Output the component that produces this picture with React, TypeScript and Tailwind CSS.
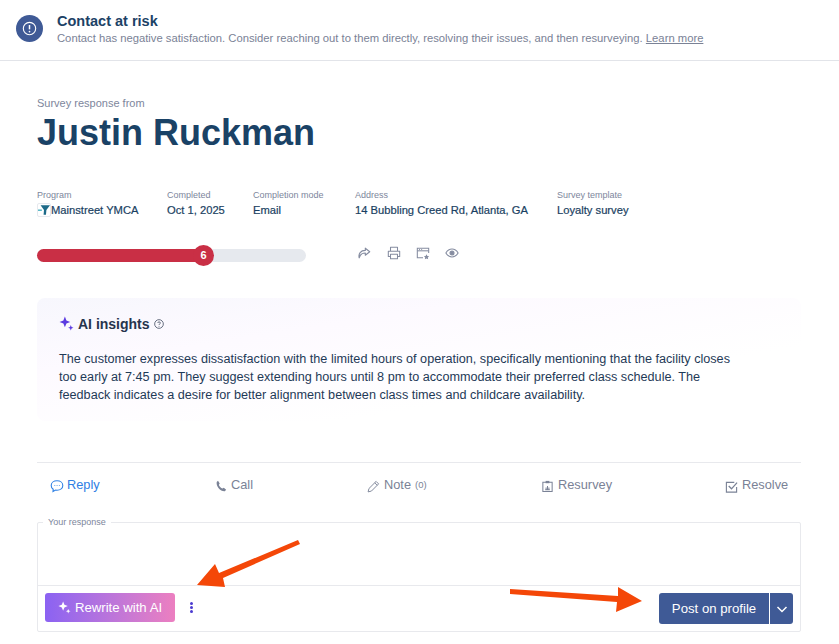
import React from 'react';

const Meta = ({ label, value, className }: { label: string; value: React.ReactNode; className: string }) => (
  <div className={className}>
    <div className="text-[9px] leading-[12px] text-[#7d869c]">{label}</div>
    <div className="mt-px text-[11.2px] leading-[16px] text-[#1a3f62] [-webkit-text-stroke:0.2px_#1a3f62]">{value}</div>
  </div>
);

const Tab = ({ icon, label, active, extra, className }: { icon: React.ReactNode; label: string; active?: boolean; extra?: string; className?: string }) => (
  <div className={`flex items-center gap-[4px] text-[12.8px] leading-[16px] ${active ? 'text-[#2f80e4]' : 'text-[#7a8296]'} ${className ?? ''}`}>
    <span className="flex w-[13px] justify-center">{icon}</span>
    <span className="-translate-y-[1px]">{label}</span>
    {extra && <span className="text-[9.5px] -translate-y-[1px]">{extra}</span>}
  </div>
);

const Sparkle = ({ className }: { className: string }) => (
  <svg viewBox="0 0 14 14" className={className} fill="currentColor">
    <path d="M5.500 0.500 L6.900 4.100 L10.500 5.500 L6.900 6.900 L5.500 10.500 L4.100 6.900 L0.500 5.500 L4.100 4.100 Z" />
    <path d="M11 8.500 L11.700 10.300 L13.500 11 L11.700 11.700 L11 13.500 L10.300 11.700 L8.500 11 L10.300 10.300 Z" />
  </svg>
);

export default function App() {
  return (
    <div className="relative h-[644px] w-[839px] overflow-hidden bg-white font-['Liberation_Sans',Arial,sans-serif]">
      {/* risk banner */}
      <div className="flex h-[61px] items-start border-b border-[#e2e4e9] pl-4 pt-[15px]">
        <div className="flex h-[27px] w-[27px] items-center justify-center rounded-full bg-[#3f5a96]">
          <svg viewBox="0 0 16 16" className="h-[15px] w-[15px]" fill="none" stroke="white" strokeWidth="1.2">
            <circle cx="8" cy="8" r="6.600" />
            <path d="M8 4.300v4.600" strokeWidth="1.600" />
            <circle cx="8" cy="11.300" r="0.900" fill="white" stroke="none" />
          </svg>
        </div>
        <div className="ml-[14px] -mt-[2px]">
          <div className="text-[14.5px] leading-[16px] font-bold text-[#1c4266]">Contact at risk</div>
          <div className="mt-[2px] text-[11.25px] leading-[14px] text-[#7a8296]">
            Contact has negative satisfaction. Consider reaching out to them directly, resolving their issues, and then resurveying. <span className="underline">Learn more</span>
          </div>
        </div>
      </div>

      <div className="pl-[37px] pr-[38px]">
        <div className="mt-[36px] text-[11px] leading-[12px] text-[#7d869c]">Survey response from</div>
        <h1 className="mt-[2px] text-[36px] leading-[44px] font-bold text-[#1a4266]">Justin Ruckman</h1>

        {/* meta row */}
        <div className="mt-[34px] flex">
          <Meta
            className="w-[130px]"
            label="Program"
            value={
              <span className="flex items-center">
                <span className="flex h-[14px] w-[14px] items-center justify-center rounded-[2px] border border-[#e6e9ee]">
                  <svg viewBox="0 0 14 12" className="h-[12px] w-[14px]">
                    <path d="M3 0.500h11L9.800 6 9.300 11.500H6.500L7 6z" fill="#1c6a88" />
                    <path d="M0 5.500h4.500v1.400H0z" fill="#2aa6b8" />
                  </svg>
                </span>
                Mainstreet YMCA
              </span>
            }
          />
          <Meta className="w-[86px]" label="Completed" value="Oct 1, 2025" />
          <Meta className="w-[102px]" label="Completion mode" value="Email" />
          <Meta className="w-[202px]" label="Address" value="14 Bubbling Creed Rd, Atlanta, GA" />
          <Meta className="" label="Survey template" value="Loyalty survey" />
        </div>

        {/* score + actions */}
        <div className="mt-[30px] flex items-center">
          <div className="relative h-[13px] w-[269px] rounded-full bg-[#e6e9ee]">
            <div className="h-[13px] w-[167px] rounded-full bg-[#c92f45]" />
            <div className="absolute left-[156px] top-[-4px] flex h-[21px] w-[21px] items-center justify-center rounded-full bg-[#c92f45] text-[11px] font-bold text-white">6</div>
          </div>
          <div className="ml-[51px] flex -translate-y-[2px] items-center gap-[15.5px] text-[#858ca0]">
            <svg viewBox="0 0 16 16" className="h-[14px] w-[14px]" fill="none" stroke="currentColor" strokeWidth="1.300" strokeLinejoin="round">
              <path d="M9.500 2.500 14.500 6.500 9.500 10.500V8C6 8 3.500 9.500 2.500 13.500 1.500 9 4 5 9.500 5Z" />
            </svg>
            <svg viewBox="0 0 16 16" className="h-[14px] w-[14px]" fill="none" stroke="currentColor" strokeWidth="1.200" strokeLinejoin="round">
              <path d="M4 6V1.500h8V6M4 12H1.500V6h13v6H12" />
              <path d="M4 9.500h8v5H4z" />
            </svg>
            <svg viewBox="0 0 16 16" className="h-[14px] w-[14px]" fill="none" stroke="currentColor" strokeWidth="1.200">
              <path d="M8 13.500H1.500v-11h13V8" />
              <path d="M1.500 5.500h13" />
              <path d="M3.500 4h1M6 4h1" />
              <path d="M12 9.500l1 2 2 .3-1.500 1.400.4 2-1.900-1-1.900 1 .4-2L9 11.800l2-.3z" fill="currentColor" stroke="none" />
            </svg>
            <svg viewBox="0 0 16 16" className="h-[14px] w-[14px] -translate-x-[1px]" fill="none" stroke="currentColor" strokeWidth="1.200">
              <path d="M1 8c1.800-3 4.200-4.500 7-4.500S13.200 5 15 8c-1.800 3-4.200 4.500-7 4.500S2.800 11 1 8Z" />
              <circle cx="8" cy="8" r="2.300" fill="currentColor" />
            </svg>
          </div>
        </div>

        {/* AI insights */}
        <div className="mt-[36px] h-[123px] rounded-[8px] bg-gradient-to-br from-[#f7f7fd] via-[#fdfaff] via-30% to-white to-70% pl-[22px] pt-[18px]">
          <div className="flex items-center">
            <Sparkle className="h-[15px] w-[15px] -translate-y-[2px] text-[#5b3be0]" />
            <span className="ml-[4px] -translate-y-px text-[14px] leading-[18px] font-bold text-[#26344d]">AI insights</span>
            <svg viewBox="0 0 12 12" className="ml-[4px] h-[10px] w-[10px] -translate-y-px" fill="none" stroke="#4a5468" strokeWidth="1">
              <circle cx="6" cy="6" r="5.200" />
              <path d="M4.400 4.800C4.400 3 7.700 3 7.700 4.800 7.700 6 6 5.800 6 7.200M6 8.300v.9" />
            </svg>
          </div>
          <p className="mt-[16px] w-[690px] text-[12.65px] leading-[18px] text-[#1f3a57]">
            The customer expresses dissatisfaction with the limited hours of operation, specifically mentioning that the facility closes too early at 7:45 pm. They suggest extending hours until 8 pm to accommodate their preferred class schedule. The feedback indicates a desire for better alignment between class times and childcare availability.
          </p>
        </div>

        {/* action tabs */}
        <div className="mt-[41px] flex h-[60px] items-start border-t border-[#e8e9ed] pl-[13px] pt-[15px]">
          <Tab
            active
            label="Reply"
            className="w-[164px]"
            icon={
              <svg viewBox="0 0 14 14" className="h-[14px] w-[14px] shrink-0" fill="none" stroke="currentColor" strokeWidth="1.100">
                <path d="M7 1.800c3.300 0 5.800 2 5.800 4.700S10.300 11.200 7 11.200c-.5 0-1 0-1.400-.1L3 12.600l.2-2.300C1.900 9.400 1.200 8 1.200 6.500 1.200 3.800 3.700 1.800 7 1.800Z" />
                <path d="M4.500 6.500h.7M6.700 6.500h.7M8.900 6.500h.7" />
              </svg>
            }
          />
          <Tab
            label="Call"
            className="w-[153px]"
            icon={
              <svg viewBox="0 0 14 14" className="h-[12px] w-[12px]" fill="currentColor">
                <path d="M3.500 1 5.500 4 4.500 5.500C5 7.500 6.800 9.300 8.700 10L10.300 9 13 11.500 11.500 13C6.500 13.500 1 7.500 2 2.200Z" />
              </svg>
            }
          />
          <Tab
            label="Note"
            extra="(0)"
            className="w-[174px]"
            icon={
              <svg viewBox="0 0 14 14" className="h-[13px] w-[13px]" fill="none" stroke="currentColor" strokeWidth="1">
                <path d="M9.800 1.500 12.500 4.200 4.800 11.900 1.200 12.800 2.100 9.200Z" />
                <path d="M8.300 3 11 5.700" />
              </svg>
            }
          />
          <Tab
            label="Resurvey"
            className="w-[184px]"
            icon={
              <svg viewBox="0 0 14 14" className="h-[14px] w-[13px]" fill="none" stroke="currentColor" strokeWidth="1.100">
                <path d="M2 3h10v10H2z" />
                <path d="M5 1.500h4V4H5z" fill="currentColor" stroke="none" />
                <path d="M4.500 11h5M5.500 10.500V8.500M7 10.500V7M8.500 10.500V8.500" />
              </svg>
            }
          />
          <Tab
            label="Resolve"
            icon={
              <svg viewBox="0 0 14 14" className="h-[13px] w-[13px]" fill="none" stroke="currentColor" strokeWidth="1.200">
                <path d="M12.500 7.500V13H1.500V2.500H10" />
                <path d="M4 6.500 7 9.500 13 2.800" strokeWidth="1.400" />
              </svg>
            }
          />
        </div>

        {/* response box */}
        <div className="relative h-[110px] rounded-[2px] border border-[#e8e9ed]">
          <span className="absolute left-[5px] top-[-6px] bg-white px-[5px] text-[9px] leading-[11px] text-[#7d869c]">Your response</span>
          <div className="mt-[62px] flex h-[47px] items-start justify-between border-t border-[#e8e9ed] px-[7px] pt-[7px]">
            <div className="flex items-center">
              <button className="flex h-[29px] w-[130px] items-center justify-center gap-[4px] rounded-[3px] bg-gradient-to-r from-[#8b62f2] to-[#ec7fc0] text-[13.2px] text-white">
                <Sparkle className="h-[13px] w-[13px]" />
                Rewrite with AI
              </button>
              <div className="ml-[15px] flex flex-col gap-[1.5px]">
                <span className="h-[2.5px] w-[2.5px] rounded-full bg-[#4b3bd0]" />
                <span className="h-[2.5px] w-[2.5px] rounded-full bg-[#4b3bd0]" />
                <span className="h-[2.5px] w-[2.5px] rounded-full bg-[#4b3bd0]" />
              </div>
            </div>
            <div className="flex h-[31px] overflow-hidden rounded-[3px] bg-[#3f5a96] text-white">
              <div className="flex w-[111px] items-center justify-center border-r border-white text-[13.2px]">Post on profile</div>
              <div className="flex w-[23px] items-center justify-center">
                <svg viewBox="0 0 12 12" className="h-[12px] w-[12px]" fill="none" stroke="white" strokeWidth="1.500">
                  <path d="M1.500 4 6 8.500 10.500 4" />
                </svg>
              </div>
            </div>
          </div>
        </div>
      </div>

      {/* annotation arrows over the page */}
      <svg className="pointer-events-none absolute left-0 top-0" width="839" height="644" viewBox="0 0 839 644">
        <path d="M298 540 L219 573 L215 564 L197 585 L225 587 L223 578 L300 544 Z" fill="#f44708" />
        <path d="M510 589 L618 596 L618 587 L642 601 L616 612 L617 602 L510 594 Z" fill="#f44708" />
      </svg>
    </div>
  );
}
